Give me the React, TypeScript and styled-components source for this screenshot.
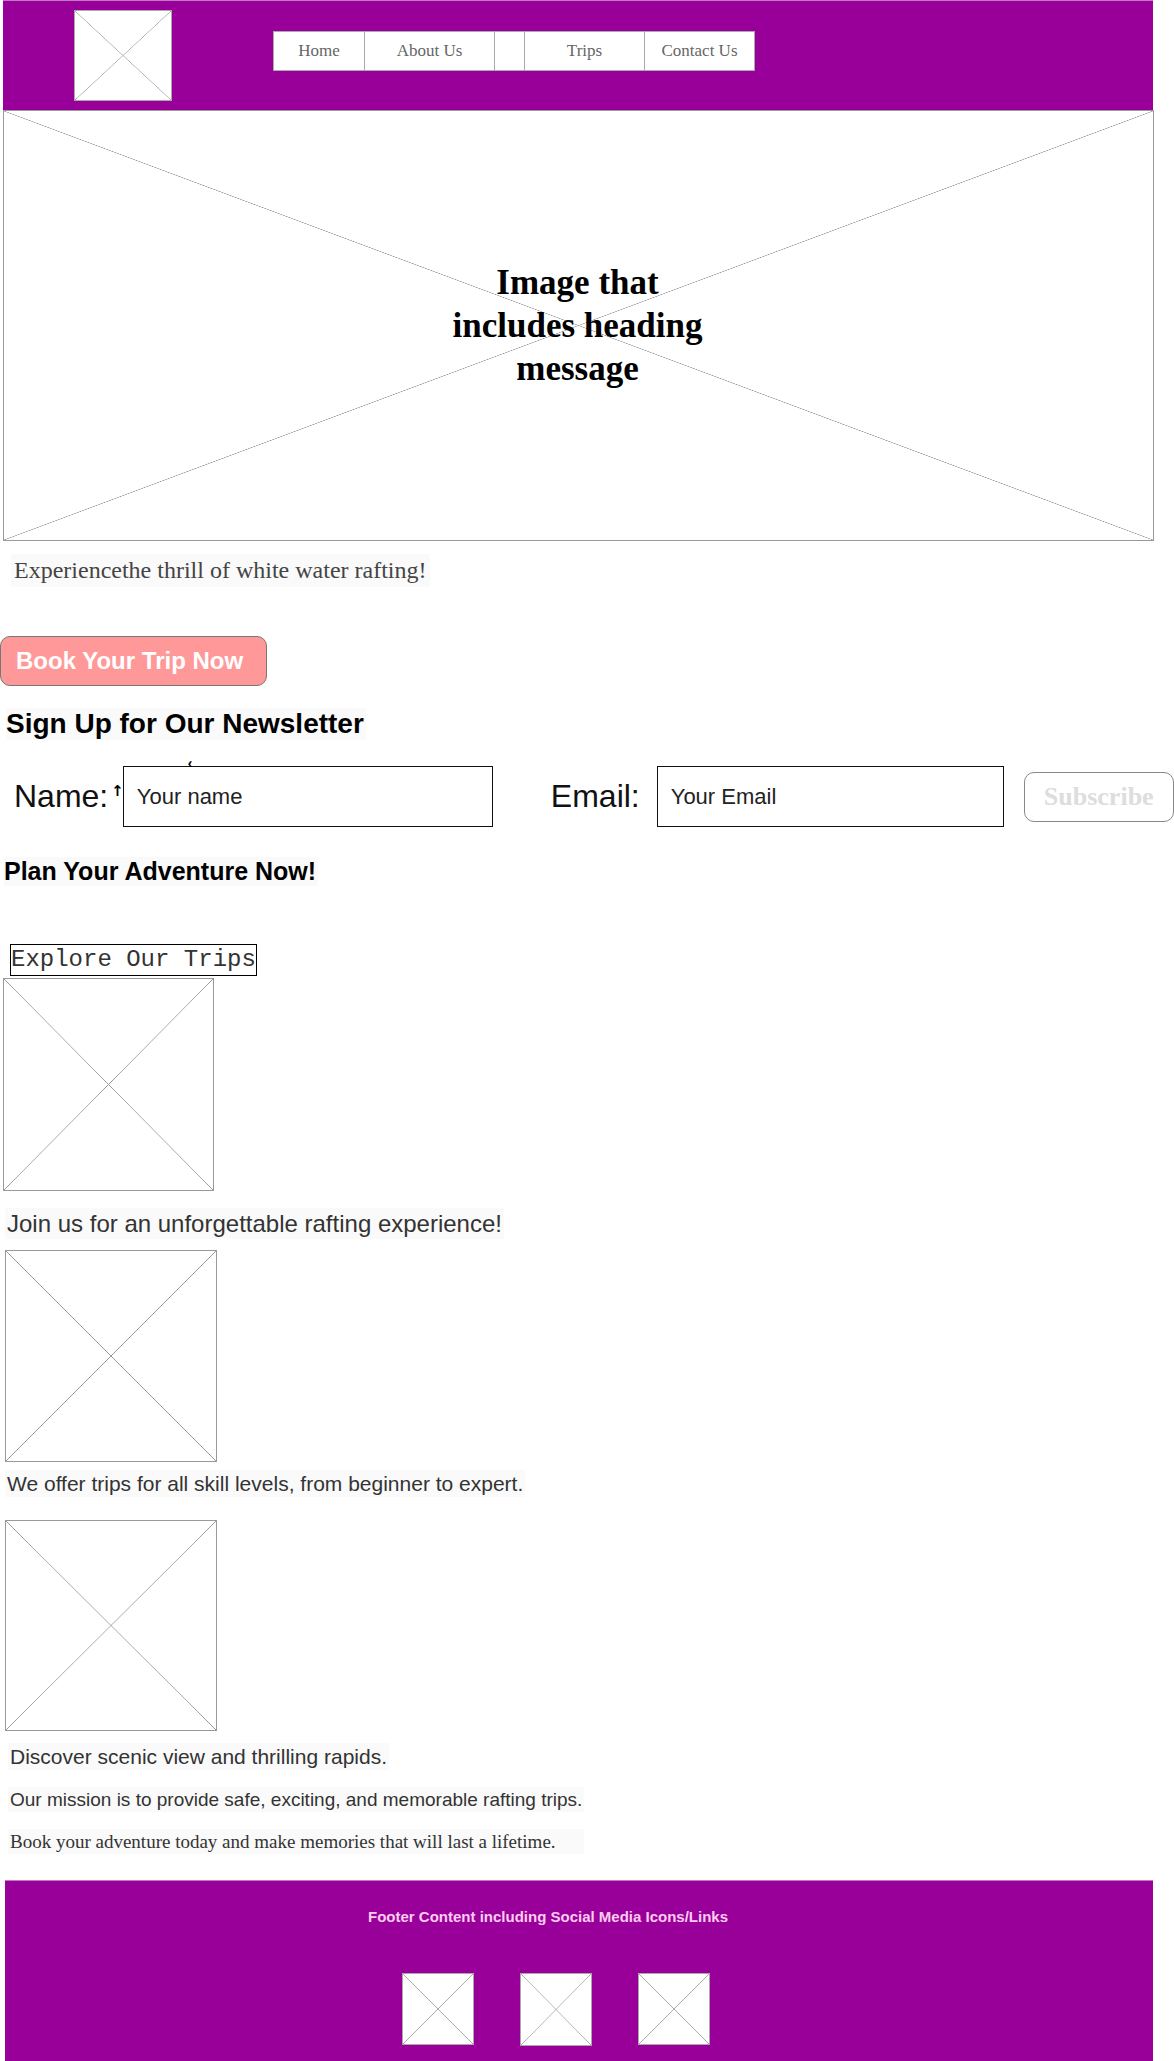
import React from 'react';
import styled, { createGlobalStyle } from 'styled-components';

const GlobalStyle = createGlobalStyle`
  body {
    margin: 0;
    background: #fff;
    font-family: "Liberation Serif", "Times New Roman", serif;
  }
`;

const Page = styled.div`
  width: 1174px;
  display: flex;
  flex-direction: column;
  align-items: flex-start;
`;

const Header = styled.header`
  box-sizing: border-box;
  width: 1150px;
  height: 110px;
  margin-left: 3px;
  background: #990099;
  border-top: 1px solid #c27ac2;
  display: flex;
  align-items: flex-start;
  padding: 9px 0 0 71px;
`;

const Placeholder = styled.div<{ $w: number; $h: number; $line?: string }>`
  box-sizing: border-box;
  flex: none;
  width: ${(p) => p.$w}px;
  height: ${(p) => p.$h}px;
  border: 1px solid ${(p) => p.$line || '#999'};
  background-color: #fff;
  background-image:
    linear-gradient(to top right, transparent calc(50% - 0.6px), ${(p) => p.$line || '#999'} 50%, transparent calc(50% + 0.6px)),
    linear-gradient(to bottom right, transparent calc(50% - 0.6px), ${(p) => p.$line || '#999'} 50%, transparent calc(50% + 0.6px));
`;

const Nav = styled.nav`
  display: flex;
  margin: 21px 0 0 101px;
  border: 1px solid #aaa;
  background: #fff;
`;

const NavItem = styled.a<{ $w: number }>`
  box-sizing: border-box;
  width: ${(p) => p.$w}px;
  height: 38px;
  display: flex;
  align-items: center;
  justify-content: center;
  font-family: "Liberation Serif", serif;
  font-size: 17px;
  color: #666;
  text-decoration: none;
  & + & {
    border-left: 1px solid #aaa;
  }
`;

const Hero = styled(Placeholder)`
  margin-left: 3px;
  display: flex;
  align-items: center;
  justify-content: center;
`;

const HeroTitle = styled.h1`
  margin: 0 0 0 -2px;
  max-width: 270px;
  text-align: center;
  font-family: "Liberation Serif", serif;
  font-weight: bold;
  font-size: 35px;
  line-height: 43px;
  color: #000;
`;

const Tagline = styled.p`
  margin: 13px 0 0 11px;
  padding: 0 3px;
  background: #fafafa;
  font-family: "Liberation Serif", serif;
  font-size: 24px;
  line-height: 33px;
  color: #444;
`;

const BookButton = styled.button`
  box-sizing: border-box;
  margin-top: 49px;
  width: 267px;
  height: 50px;
  padding: 0 0 0 15px;
  text-align: left;
  background: #ff9999;
  border: 1px solid #777;
  border-radius: 10px;
  color: #fff;
  font-family: "Liberation Sans", Arial, sans-serif;
  font-weight: bold;
  font-size: 24px;
`;

const Heading = styled.h2<{ $size: number; $left: number; $top: number }>`
  margin: ${(p) => p.$top}px 0 0 ${(p) => p.$left}px;
  padding-right: 2px;
  background: #fafafa;
  font-family: "Liberation Sans", Arial, sans-serif;
  font-weight: bold;
  font-size: ${(p) => p.$size}px;
  line-height: ${(p) => Math.round(p.$size * 1.15)}px;
  color: #000;
`;

const SignupForm = styled.form`
  margin-top: 26px;
  display: flex;
  align-items: center;
  font-family: "Liberation Sans", Arial, sans-serif;
`;

const Label = styled.label<{ $left: number }>`
  margin-left: ${(p) => p.$left}px;
  font-size: 32px;
  color: #111;
`;

const Cursor = styled.span`
  margin: -12px 0 0 3px;
  font-family: "DejaVu Sans", sans-serif;
  font-size: 15px;
  line-height: 16px;
  font-weight: bold;
  color: #000;
`;

const InputWrap = styled.div<{ $left: number }>`
  position: relative;
  margin-left: ${(p) => p.$left}px;
`;

const Caret = styled.span`
  position: absolute;
  top: -11px;
  left: 65px;
  font-size: 14px;
  font-weight: bold;
  color: #000;
`;

const TextInput = styled.input<{ $w: number }>`
  box-sizing: border-box;
  width: ${(p) => p.$w}px;
  height: 61px;
  padding: 0 0 0 13px;
  border: 1px solid #111;
  border-radius: 0;
  font-family: "Liberation Sans", Arial, sans-serif;
  font-size: 22px;
  color: #111;
  &::placeholder {
    color: #222;
  }
`;

const SubscribeButton = styled.button`
  box-sizing: border-box;
  margin-left: 20px;
  width: 150px;
  height: 50px;
  background: #fff;
  border: 1px solid #888;
  border-radius: 10px;
  font-family: "Liberation Serif", serif;
  font-weight: bold;
  font-size: 26px;
  color: #ddd;
`;

const ExploreBox = styled.div`
  margin: 58px 0 0 10px;
  border: 1px solid #000;
  font-family: "Liberation Mono", "Courier New", monospace;
  font-size: 24px;
  line-height: 30px;
  color: #333;
`;

const TripImage = styled(Placeholder)<{ $left: number; $top: number }>`
  margin: ${(p) => p.$top}px 0 0 ${(p) => p.$left}px;
`;

const Copy = styled.p<{ $size: number; $top: number; $left: number; $serif?: boolean; $extra?: number }>`
  margin: ${(p) => p.$top}px 0 0 ${(p) => p.$left}px;
  padding: 0 ${(p) => p.$extra || 2}px 0 2px;
  background: #fafafa;
  font-family: ${(p) => (p.$serif ? '"Liberation Serif", serif' : '"Liberation Sans", Arial, sans-serif')};
  font-size: ${(p) => p.$size}px;
  line-height: ${(p) => Math.round(p.$size * 1.3)}px;
  color: #333;
`;

const Footer = styled.footer`
  box-sizing: border-box;
  margin: 26px 0 0 5px;
  width: 1148px;
  height: 182px;
  background: #990099;
  border-top: 1px solid #c27ac2;
  display: flex;
  flex-direction: column;
  align-items: center;
  padding-top: 28px;
`;

const FooterText = styled.p`
  margin: 0 62px 0 0;
  font-family: "Liberation Sans", Arial, sans-serif;
  font-weight: bold;
  font-size: 15px;
  line-height: 16px;
  color: #ffccf2;
`;

const SocialRow = styled.div`
  margin: 48px 46px 0 0;
  display: flex;
  gap: 46px;
`;

const navLinks = [
  { label: 'Home', w: 90 },
  { label: 'About Us', w: 130 },
  { label: '', w: 30 },
  { label: 'Trips', w: 120 },
  { label: 'Contact Us', w: 110 },
];

export default function App() {
  return (
    <Page>
      <GlobalStyle />
      <Header>
        <Placeholder $w={98} $h={91} $line="#aaa" />
        <Nav>
          {navLinks.map((l, i) => (
            <NavItem key={i} $w={l.w} href="#">
              {l.label}
            </NavItem>
          ))}
        </Nav>
      </Header>

      <Hero $w={1151} $h={431}>
        <HeroTitle>Image that includes heading message</HeroTitle>
      </Hero>

      <Tagline>Experiencethe thrill of white water rafting!</Tagline>

      <BookButton>Book Your Trip Now</BookButton>

      <Heading $size={28} $left={6} $top={22}>
        Sign Up for Our Newsletter
      </Heading>

      <SignupForm onSubmit={(e) => e.preventDefault()}>
        <Label $left={14}>Name:</Label>
        <Cursor>↑</Cursor>
        <InputWrap $left={-1}>
          <Caret>‹</Caret>
          <TextInput $w={370} placeholder="Your name" />
        </InputWrap>
        <Label $left={58}>Email:</Label>
        <InputWrap $left={17}>
          <TextInput $w={347} placeholder="Your Email" />
        </InputWrap>
        <SubscribeButton type="submit">Subscribe</SubscribeButton>
      </SignupForm>

      <Heading $size={25} $left={4} $top={30}>
        Plan Your Adventure Now!
      </Heading>

      <ExploreBox>Explore Our Trips</ExploreBox>
      <TripImage $w={211} $h={213} $left={3} $top={2} />
      <Copy $size={24} $top={17} $left={5}>
        Join us for an unforgettable rafting experience!
      </Copy>
      <TripImage $w={212} $h={212} $left={5} $top={11} />
      <Copy $size={21} $top={8} $left={5}>
        We offer trips for all skill levels, from beginner to expert.
      </Copy>
      <TripImage $w={212} $h={211} $left={5} $top={23} />
      <Copy $size={21} $top={12} $left={8}>
        Discover scenic view and thrilling rapids.
      </Copy>
      <Copy $size={19} $top={17} $left={8}>
        Our mission is to provide safe, exciting, and memorable rafting trips.
      </Copy>
      <Copy $size={19} $top={17} $left={8} $serif $extra={28}>
        Book your adventure today and make memories that will last a lifetime.
      </Copy>

      <Footer>
        <FooterText>Footer Content including Social Media Icons/Links</FooterText>
        <SocialRow>
          <Placeholder $w={72} $h={72} $line="#aaa" />
          <Placeholder $w={72} $h={73} $line="#aaa" />
          <Placeholder $w={72} $h={72} $line="#aaa" />
        </SocialRow>
      </Footer>
    </Page>
  );
}
